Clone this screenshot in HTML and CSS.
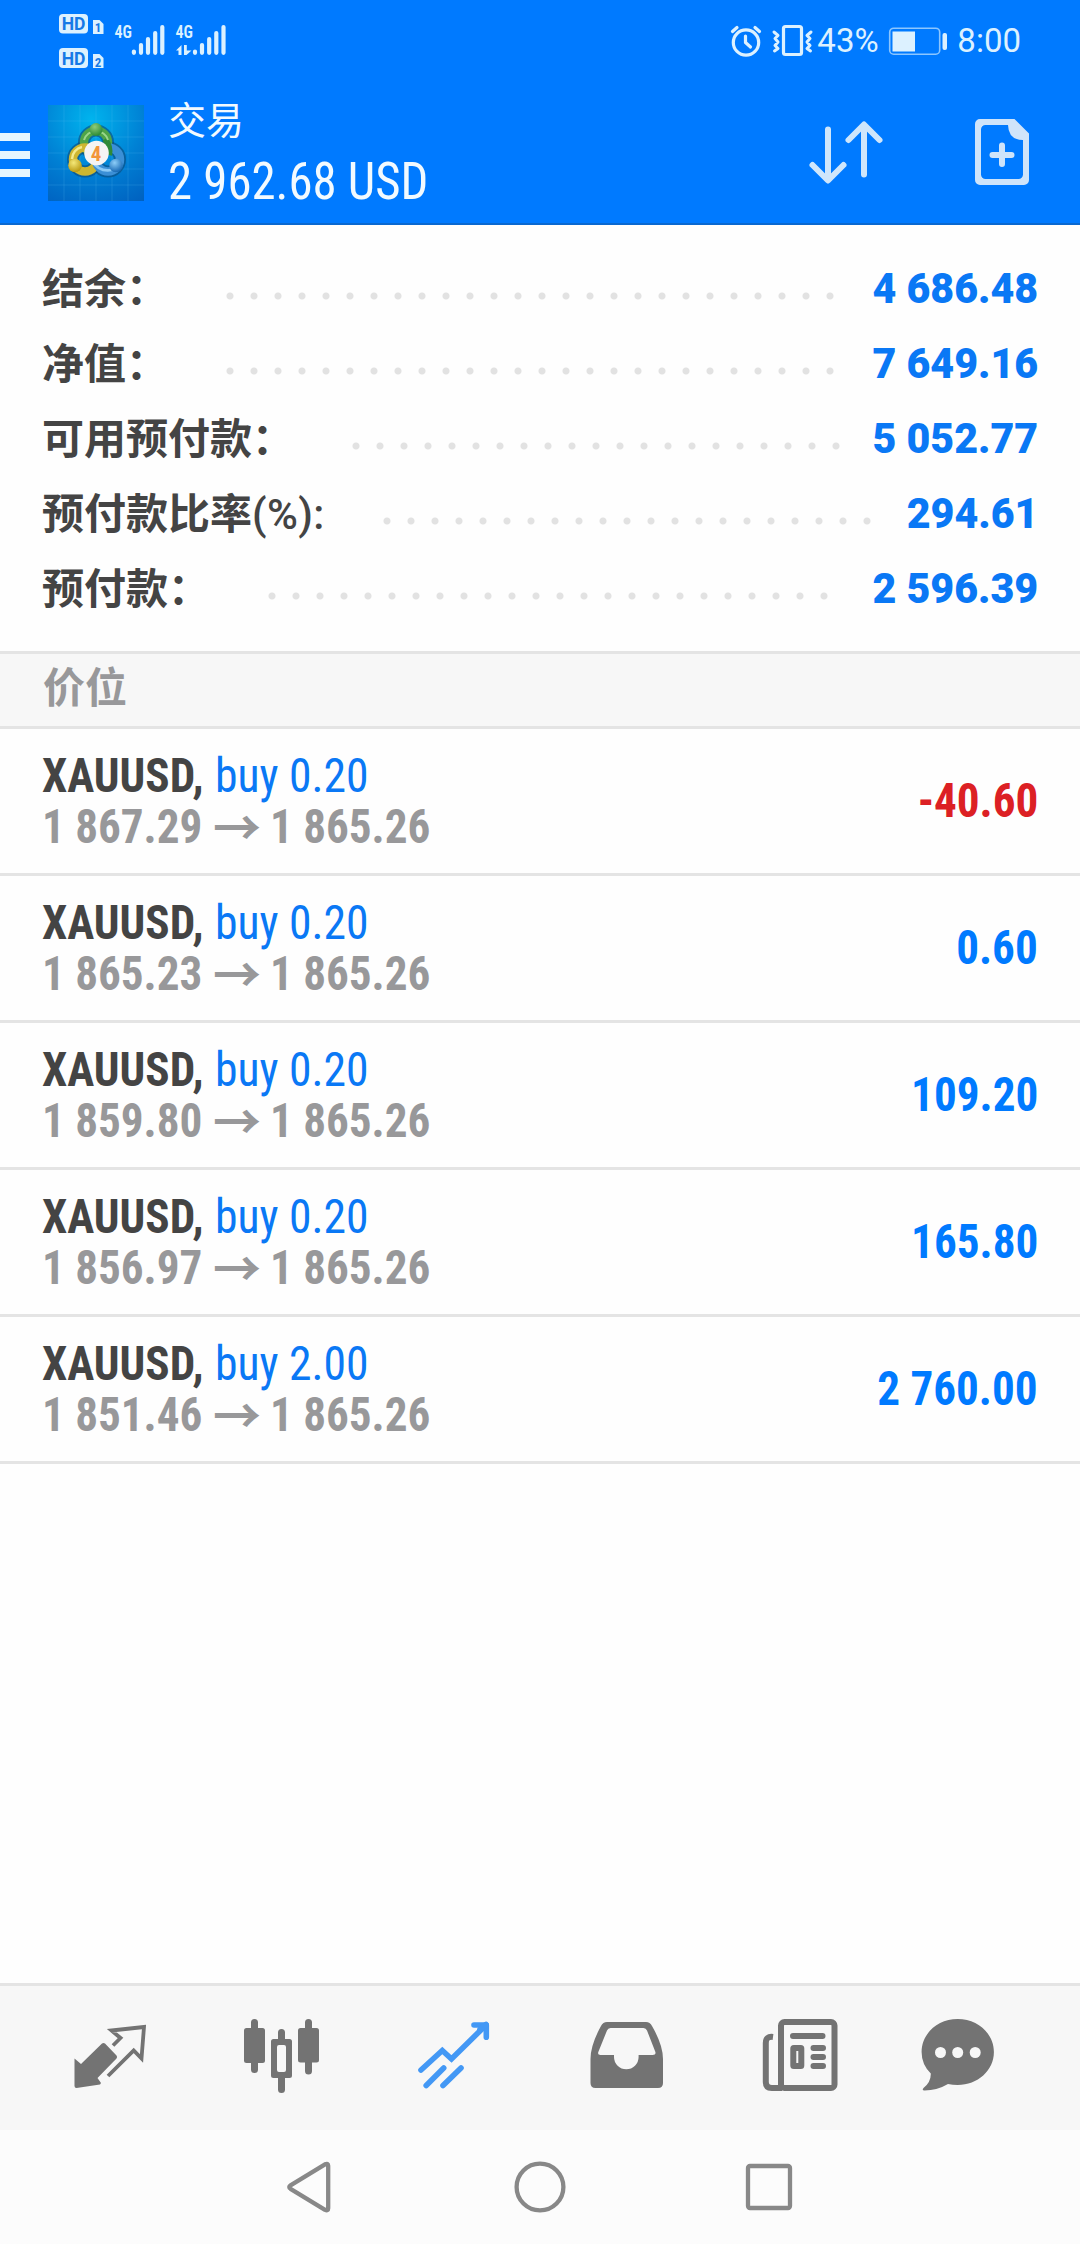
FILE: index.html
```
<!DOCTYPE html>
<html lang="zh-CN">
<head>
<meta charset="utf-8">
<title>交易</title>
<link rel="stylesheet" href="styles.css">
</head>
<body>
<div class="app">
  <header class="top">
    <div class="status">
      <svg class="status-left" viewBox="0 0 300 80" fill="#dcf1ff">
        <rect x="59" y="14" width="29" height="19.5" rx="4"/>
        <rect x="59" y="48" width="29" height="20" rx="4"/>
        <text class="hd" x="73.500" y="30">HD</text>
        <text class="hd" x="73.500" y="64.500">HD</text>
        <path d="M93 20h6.500l4 4v10h-10.500z"/>
        <path d="M93 54h6.500l4 4v10h-10.500z"/>
        <text class="sim" x="98" y="32">1</text>
        <text class="sim" x="98" y="66.500">2</text>
        <text class="net" x="114.500" y="38" textLength="17.500" lengthAdjust="spacingAndGlyphs">4G</text>
        <text class="net" x="175.500" y="38" textLength="17.500" lengthAdjust="spacingAndGlyphs">4G</text>
        <g stroke="#dcf1ff" stroke-width="4.200" stroke-linecap="round">
          <path d="M133.900 51.500v1.300M141 45v7.800M148 39v13.800M155.200 33v19.800M162.300 27v25.800"/>
          <path d="M195 51.500v1.300M202 45v7.800M209.200 39v13.800M216.300 33v19.800M223.500 27v25.800"/>
        </g>
        <path d="M176 50.500l5.500-5.500v10h-3v-4.500zM184 45h2.800v5.500h4.700l-5 4.500h-2.500z"/>
      </svg>
      <div class="status-right">
        <svg viewBox="728 20 88 40" width="88" height="40" fill="none" stroke="#dcf1ff" stroke-linecap="round" stroke-linejoin="round">
          <circle cx="745" cy="41.500" r="12.700" stroke-width="3.200"/>
          <path d="M744.500 35v6.500l5 4.500" stroke-width="3.200"/>
          <path d="M731.500 30.500l4.500-4M758.500 30.500l-4.500-4" stroke-width="3.200"/>
          <rect x="782.500" y="25.500" width="18" height="28" rx="2" stroke-width="3.200"/>
          <path d="M773 31l4 3.500-3 3 3 3.500-3 3.500 3 3-3.500 2.500M810 31l-4 3.500 3 3-3 3.500 3 3.500-3 3 3.500 2.500" stroke-width="3"/>
        </svg>
        <span class="status-text pct">43%</span>
        <svg class="battery" viewBox="886 20 64 40" width="64" height="40" fill="#dcf1ff">
          <rect x="889.700" y="27.200" width="50" height="26" rx="4" fill="none" stroke="#8cc6ff" stroke-width="1.600"/>
          <rect x="892.500" y="30.500" width="22.500" height="20"/>
          <rect x="942.500" y="32" width="4.500" height="17" rx="2"/>
        </svg>
        <span class="status-text">8:00</span>
      </div>
    </div>
    <div class="bar">
      <svg class="menu" viewBox="0 0 30 44" fill="#e6f6ff"><path d="M0 0h30v8H0zM0 18h30v8H0zM0 36h30v8H0z"/></svg>
      <svg class="logo" viewBox="0 0 96 96">
        <defs>
          <radialGradient id="bg" cx=".45" cy=".15" r="1"><stop offset="0" stop-color="#00b4ee"/><stop offset=".55" stop-color="#0080d4"/><stop offset="1" stop-color="#0061c0"/></radialGradient>
          <radialGradient id="gn" cx=".4" cy=".3" r=".7"><stop offset="0" stop-color="#8fcc78"/><stop offset="1" stop-color="#2b8a35"/></radialGradient>
          <radialGradient id="ye" cx=".4" cy=".3" r=".7"><stop offset="0" stop-color="#f4e878"/><stop offset="1" stop-color="#b99a12"/></radialGradient>
          <radialGradient id="bl" cx=".4" cy=".3" r=".7"><stop offset="0" stop-color="#8ccdf8"/><stop offset="1" stop-color="#1668b4"/></radialGradient>
        </defs>
        <rect width="96" height="96" fill="url(#bg)"/>
        <path d="M16 0v96M32 0v96M48 0v96M64 0v96M80 0v96M0 16h96M0 32h96M0 48h96M0 64h96M0 80h96" stroke="#5cc4f4" stroke-opacity=".2"/>
        <g fill="none" stroke="#0b4a78" stroke-opacity=".6" stroke-width="12"><circle cx="48" cy="37.500" r="12"/><circle cx="37" cy="54.500" r="12"/><circle cx="60" cy="54.500" r="12"/></g>
        <circle cx="48" cy="37.500" r="12" fill="none" stroke="#4fa548" stroke-width="8.500"/>
        <circle cx="37" cy="54.500" r="12" fill="none" stroke="#cdb630" stroke-width="8.500"/>
        <circle cx="60" cy="54.500" r="12" fill="none" stroke="#3b8fd6" stroke-width="8.500"/>
        <path d="M57 34q6 8 4 16" fill="none" stroke="#2f8a38" stroke-width="6"/>
        <path d="M36 35a12.500 12.500 0 0 1 24 0" fill="none" stroke="#9cd68c" stroke-width="2"/>
        <path d="M24 54a12.500 12.500 0 0 1 10-12" fill="none" stroke="#f3ea8c" stroke-width="2.500"/>
        <path d="M44 56q8 13 24 8" fill="none" stroke="#8ccaf6" stroke-width="2.500"/>
        <circle cx="48" cy="24.500" r="6.500" fill="url(#gn)"/>
        <circle cx="27" cy="60.500" r="6.800" fill="url(#ye)"/>
        <circle cx="68" cy="60.500" r="6.800" fill="url(#bl)"/>
        <circle cx="48.500" cy="48" r="12.300" fill="#f5f4f4"/>
        <text class="four" x="48" y="55.500">4</text>
      </svg>
      <div class="account">
        <div class="title">交易</div>
        <div class="total"><span>2 962.68 USD</span></div>
      </div>
      <svg class="sort" viewBox="808 119 76 68" fill="none" stroke="#cfe6fb" stroke-width="6" stroke-linecap="round" stroke-linejoin="round">
        <path d="M828 129.500V180M812.500 165L828 180.500 843.500 165M864 174.500V125M848.500 140L864 124.500 879.500 140"/>
      </svg>
      <svg class="new-order" viewBox="975 120 54 66">
        <path fill="#cfe4fa" fill-rule="evenodd" d="M980 120h34.500L1029 134.500V181a5 5 0 0 1-5 5h-44a5 5 0 0 1-5-5v-56a5 5 0 0 1 5-5zM1008 126h-22.500a4.500 4.500 0 0 0-4.500 4.500v45a4.500 4.500 0 0 0 4.500 4.500h33a4.500 4.500 0 0 0 4.500-4.500V141q-14.500 0-15-15z"/>
        <path d="M1002 146.500v18.500M992.500 156h19" stroke="#cfe4fa" stroke-width="6" stroke-linecap="round"/>
      </svg>
    </div>
  </header>

  <section class="summary">
    <div class="sum-row"><span class="label">结余：</span><i class="dots"></i><b class="val">4 686.48</b></div>
    <div class="sum-row"><span class="label">净值：</span><i class="dots"></i><b class="val">7 649.16</b></div>
    <div class="sum-row"><span class="label">可用预付款：</span><i class="dots"></i><b class="val">5 052.77</b></div>
    <div class="sum-row"><span class="label">预付款比率<em>(%):</em></span><i class="dots"></i><b class="val">294.61</b></div>
    <div class="sum-row"><span class="label">预付款：</span><i class="dots"></i><b class="val">2 596.39</b></div>
  </section>

  <div class="section-head">价位</div>

  <main class="positions">
    <div class="pos">
      <div class="info">
        <div class="line"><b>XAUUSD,</b><span>buy 0.20</span></div>
        <div class="prices"><b>1 867.29</b><i>→</i><b>1 865.26</b></div>
      </div>
      <b class="profit loss">-40.60</b>
    </div>
    <div class="pos">
      <div class="info">
        <div class="line"><b>XAUUSD,</b><span>buy 0.20</span></div>
        <div class="prices"><b>1 865.23</b><i>→</i><b>1 865.26</b></div>
      </div>
      <b class="profit">0.60</b>
    </div>
    <div class="pos">
      <div class="info">
        <div class="line"><b>XAUUSD,</b><span>buy 0.20</span></div>
        <div class="prices"><b>1 859.80</b><i>→</i><b>1 865.26</b></div>
      </div>
      <b class="profit">109.20</b>
    </div>
    <div class="pos">
      <div class="info">
        <div class="line"><b>XAUUSD,</b><span>buy 0.20</span></div>
        <div class="prices"><b>1 856.97</b><i>→</i><b>1 865.26</b></div>
      </div>
      <b class="profit">165.80</b>
    </div>
    <div class="pos">
      <div class="info">
        <div class="line"><b>XAUUSD,</b><span>buy 2.00</span></div>
        <div class="prices"><b>1 851.46</b><i>→</i><b>1 865.26</b></div>
      </div>
      <b class="profit">2 760.00</b>
    </div>
  </main>

  <nav class="tabs">
    <svg viewBox="24 1986 172 144" fill="#737373">
      <path d="M74.500 2058.500L81 2064 102 2043.500q1.500-1.200 3 0L116.500 2055.500q1.200 1.500 0 3L97.500 2078l3.500 5-1 1.500L76.500 2088q-2 0-2-2z"/>
      <path d="M113 2045.500L120.500 2038 111.500 2030.500 144 2027 141.500 2058.500 133.700 2050.500 108 2076" fill="none" stroke="#737373" stroke-width="3.800"/>
    </svg>
    <svg viewBox="196 1986 172 144" fill="#737373">
      <path d="M254.500 2022.500v47M308.500 2022.500v48.500M281.500 2032.500v8M281.500 2078v11.500" stroke="#737373" stroke-width="7" stroke-linecap="round"/>
      <rect x="244" y="2028" width="21" height="35" rx="2.500"/><rect x="298" y="2028" width="21" height="34.500" rx="2.500"/>
      <path fill-rule="evenodd" d="M273.500 2039h16q2.500 0 2.500 2.500v34q0 2.500-2.500 2.500h-16q-2.500 0-2.500-2.500v-34q0-2.500 2.500-2.500zm5.500 6q-2 0-2 2v23q0 2 2 2h5q2 0 2-2v-23q0-2-2-2z"/>
    </svg>
    <svg viewBox="368 1986 172 144" fill="none" stroke="#4398f5" stroke-width="5.600" stroke-linecap="round">
      <path d="M421 2070L442.300 2050.500 451.500 2059 485 2026"/><path d="M474 2025h12.300v12.300" stroke-linejoin="round"/><path d="M480 2029.500l6-5"/>
      <path d="M426.200 2085.500l17.500-17.500M443 2085.500l18-17.500"/>
    </svg>
    <svg viewBox="540 1986 172 144" fill="#737373">
      <path fill-rule="evenodd" d="M607 2022h39q4 0 6 4 11 19 11 33v24q0 5-5 5h-62.500q-5 0-5-5v-24q0-14 10.500-33 2-4 6-4zm3.500 6q-2.500 0-3.500 2.500l-8.500 21q-1.500 3.500 2 3.500h13.500v2a12.300 12.300 0 0 0 24.600 0v-2h13.900q4 0 2.700-3.500l-8.200-21q-1-2.500-3.500-2.500z"/>
    </svg>
    <svg viewBox="712 1986 172 144" fill="none" stroke="#737373" stroke-width="6">
      <rect x="781" y="2022" width="53.500" height="66" rx="3.500"/>
      <path d="M773 2037q-7.200-1-7.200 6v39q0 6 6 6H782"/>
      <path d="M793 2036h29.500M813.500 2048h9.500M813.500 2057h9.500M813.500 2066h9.500" stroke-linecap="round"/>
      <rect x="793.300" y="2048" width="8" height="18" rx=".5"/>
    </svg>
    <svg viewBox="884 1986 172 144" fill="#737373">
      <path d="M957.700 2019c20 0 36.200 14.500 36.200 33s-16.200 33-36.200 33q-5 0-9.700-1-11 6.500-23.500 6.500-3 0-1-2.500 7.500-6 7.300-14.500-9.200-9-9.200-21.500c0-18.500 16.100-33 36.100-33z"/>
      <g fill="#f7f7f7"><circle cx="940.500" cy="2052.500" r="5.500"/><circle cx="957.700" cy="2052.500" r="5.500"/><circle cx="975.200" cy="2052.500" r="5.500"/></g>
    </svg>
  </nav>
  <div class="sysnav">
    <svg viewBox="0 2130 1080 114" fill="none" stroke="#888" stroke-width="4.300" stroke-linejoin="round">
      <path d="M290.500 2185.300L325 2164.300q3.200-1.500 3.200 1.500v42.500q0 3-3.200 1.500L290.500 2188.800q-2.500-1.700 0-3.500z"/>
      <circle cx="540" cy="2187" r="23.400"/>
      <rect x="748" y="2166" width="42" height="42" rx="2"/>
    </svg>
  </div>
</div>
</body>
</html>
```
FILE: styles.css
```
* { box-sizing: border-box; }
body {
  margin: 0;
  background: #fefefe;
  font-family: Roboto, "Noto Sans CJK SC", sans-serif;
}
svg { display: block; flex: none; }
i, em { font-style: normal; }

.app {
  display: flex;
  flex-direction: column;
  width: 1080px;
  height: 2244px;
}

/* Header */
.top {
  height: 225px;
  background: #007aff;
  border-bottom: 2px solid #0a68d0;
}
.status {
  display: flex;
  justify-content: space-between;
  height: 80px;
  padding-right: 59px;
}
.status-left { width: 300px; height: 80px; }
.hd, .sim, .net, .four { font-family: "Roboto Condensed", Roboto, sans-serif; font-weight: 700; }
.hd { font-family: Roboto, sans-serif; font-size: 17.5px; fill: #1679e6; text-anchor: middle; }
.sim { font-size: 13px; fill: #1679e6; text-anchor: middle; }
.net { font-size: 18px; font-weight: 600; }
.four { font-size: 21px; fill: #f2953a; text-anchor: middle; }
.status-right {
  display: flex;
  align-items: center;
  height: 82px;
}
.status-text {
  font-size: 33px;
  line-height: 40px;
  color: #dcf1ff;
}
.pct { width: 69px; }
.battery { margin-right: 7px; }
.bar {
  display: flex;
  align-items: flex-start;
  padding-top: 18px;
}
.menu { width: 30px; height: 44px; margin-top: 35px; }
.logo { width: 96px; height: 96px; margin: 7px 24px 0 18px; }
.account { width: 640px; color: #f2faff; }
.title {
  font-family: "Noto Sans CJK SC", sans-serif;
  font-size: 38px;
  line-height: 40px;
}
.total {
  font-family: "Roboto Condensed", Roboto, sans-serif;
  font-size: 51px;
  line-height: 60px;
  margin-top: 14px;
}
.total span { display: inline-block; transform: scaleX(.957); transform-origin: 0 0; }
.sort { width: 76px; height: 68px; margin-top: 21px; }
.new-order { width: 54px; height: 66px; margin: 21px 0 0 91px; }

/* Account summary */
.summary {
  height: 426px;
  padding: 26px 42px 0 42px;
}
.sum-row {
  display: flex;
  align-items: center;
  height: 75px;
  font-size: 42px;
  font-weight: 700;
}
.label {
  height: 66px;
  color: #444;
  font-family: "Noto Sans CJK SC", sans-serif;
  line-height: 60px;
}
.label em {
  font-family: Roboto, sans-serif;
  font-weight: 500;
  line-height: 1;
  letter-spacing: .4px;
}
.dots {
  flex: 1;
  height: 8px;
  margin: 14px 29px 0 50px;
  background: radial-gradient(circle at center, #e2e2e2 3px, transparent 4px) 0 0 / 24px 8px repeat-x;
}
.val { color: #0a78f5; transform: scaleX(.98); transform-origin: 100% 0; }

.section-head {
  height: 78px;
  padding-left: 43px;
  border-top: 3px solid #e4e4e4;
  border-bottom: 3px solid #e4e4e4;
  background: #f7f7f7;
  color: #98989a;
  font: 700 42px/62px "Noto Sans CJK SC", sans-serif;
}

/* Open positions */
.positions {
  flex: 1;
  font: 400 48px/51px "Roboto Condensed", Roboto, sans-serif;
  white-space: nowrap;
}
.pos {
  display: flex;
  justify-content: space-between;
  align-items: center;
  height: 147px;
  padding: 0 42px;
  border-bottom: 3px solid #e4e4e4;
}
.line { display: grid; grid-template-columns: 173px auto; color: #0a78f5; }
.line b { color: #444; }
.line b, .line span, .prices b { justify-self: start; transform: scaleX(.94); transform-origin: 0 0; }
.line span { transform: scaleX(.95); }
.prices { display: grid; grid-template-columns: 171px 57px auto; height: 51px; color: #98989a; }
.prices i {
  font-family: "Noto Sans CJK SC", sans-serif;
  font-weight: 700;
  line-height: 46px;
}
.profit {
  padding-bottom: 2px;
  color: #007aff;
  transform: scaleX(.94);
  transform-origin: 100% 0;
}
.loss { color: #dc2024; }

/* Bottom tabs and system navigation */
.tabs {
  display: grid;
  grid-template-columns: repeat(6, 172px);
  justify-content: center;
  height: 147px;
  border-top: 3px solid #e4e4e4;
  background: #f7f7f7;
}
.sysnav { height: 114px; background: #fcfcfc; }
```
